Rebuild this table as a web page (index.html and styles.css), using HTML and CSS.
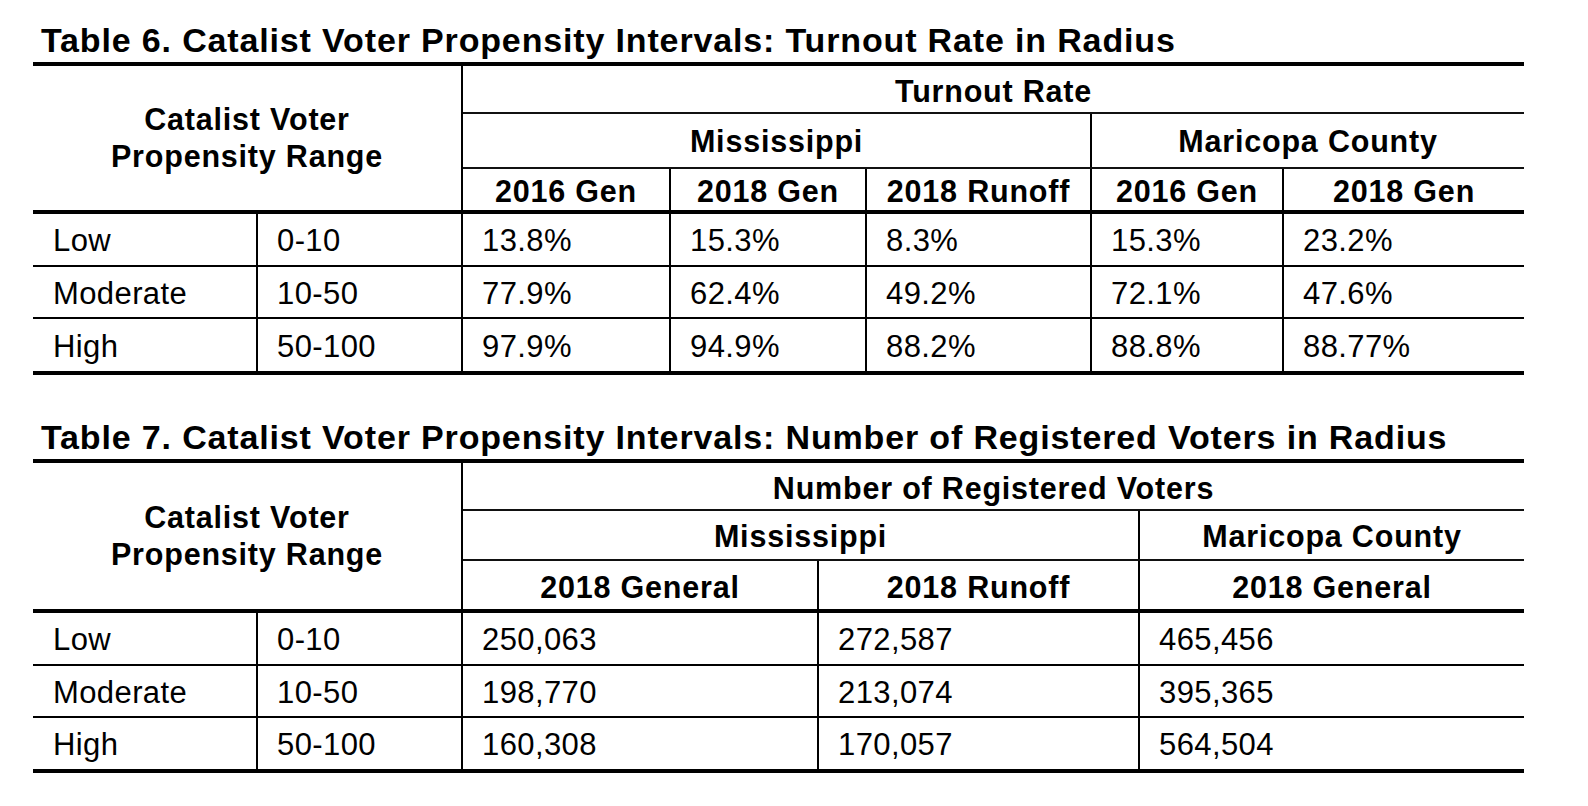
FILE: index.html
```html
<!DOCTYPE html>
<html lang="en">
<head>
<meta charset="utf-8">
<title>Catalist Voter Propensity Intervals</title>
<link rel="stylesheet" href="styles.css">
</head>
<body>
<main class="page">
  <section class="block block-6">
    <h2 class="title">Table 6. Catalist Voter Propensity Intervals: Turnout Rate in Radius</h2>
    <table class="grid t6">
      <colgroup>
        <col class="c-label"><col class="c-range">
        <col class="c6-a"><col class="c6-b"><col class="c6-c"><col class="c6-d"><col class="c6-e">
      </colgroup>
      <thead>
        <tr class="h1">
          <th class="corner" colspan="2" rowspan="3">Catalist Voter<br>Propensity Range</th>
          <th class="span-top" colspan="5">Turnout Rate</th>
        </tr>
        <tr class="h2">
          <th class="region" colspan="3">Mississippi</th>
          <th class="region" colspan="2">Maricopa County</th>
        </tr>
        <tr class="h3">
          <th class="yr">2016 Gen</th>
          <th class="yr">2018 Gen</th>
          <th class="yr">2018 Runoff</th>
          <th class="yr">2016 Gen</th>
          <th class="yr">2018 Gen</th>
        </tr>
      </thead>
      <tbody>
        <tr class="r1">
          <td class="lbl">Low</td><td>0-10</td>
          <td>13.8%</td><td>15.3%</td><td>8.3%</td><td>15.3%</td><td>23.2%</td>
        </tr>
        <tr class="r2">
          <td class="lbl">Moderate</td><td>10-50</td>
          <td>77.9%</td><td>62.4%</td><td>49.2%</td><td>72.1%</td><td>47.6%</td>
        </tr>
        <tr class="r3">
          <td class="lbl">High</td><td>50-100</td>
          <td>97.9%</td><td>94.9%</td><td>88.2%</td><td>88.8%</td><td>88.77%</td>
        </tr>
      </tbody>
    </table>
  </section>

  <section class="block block-7">
    <h2 class="title">Table 7. Catalist Voter Propensity Intervals: Number of Registered Voters in Radius</h2>
    <table class="grid t7">
      <colgroup>
        <col class="c-label"><col class="c-range">
        <col class="c7-a"><col class="c7-b"><col class="c7-c">
      </colgroup>
      <thead>
        <tr class="h1">
          <th class="corner" colspan="2" rowspan="3">Catalist Voter<br>Propensity Range</th>
          <th class="span-top" colspan="3">Number of Registered Voters</th>
        </tr>
        <tr class="h2">
          <th class="region" colspan="2">Mississippi</th>
          <th class="region">Maricopa County</th>
        </tr>
        <tr class="h3">
          <th class="yr">2018 General</th>
          <th class="yr">2018 Runoff</th>
          <th class="yr">2018 General</th>
        </tr>
      </thead>
      <tbody>
        <tr class="r1">
          <td class="lbl">Low</td><td>0-10</td>
          <td>250,063</td><td>272,587</td><td>465,456</td>
        </tr>
        <tr class="r2">
          <td class="lbl">Moderate</td><td>10-50</td>
          <td>198,770</td><td>213,074</td><td>395,365</td>
        </tr>
        <tr class="r3">
          <td class="lbl">High</td><td>50-100</td>
          <td>160,308</td><td>170,057</td><td>564,504</td>
        </tr>
      </tbody>
    </table>
  </section>
</main>
</body>
</html>
```

FILE: styles.css
```css
html, body {
  margin: 0;
  padding: 0;
  background: #ffffff;
}

body {
  font-family: "Liberation Sans", Arial, sans-serif;
  color: #000000;
}

.page {
  display: flex;
  flex-direction: column;
  padding: 20px 0 0 33px;
  width: 1491px;
}

.block-7 {
  margin-top: 42px;
}

.title {
  margin: 0;
  padding: 0 0 2px 8px;
  font-size: 34px;
  line-height: 40px;
  font-weight: bold;
  letter-spacing: 0.85px;
  border-bottom: 4px solid #000;
  white-space: nowrap;
}

.grid {
  width: 1491px;
  table-layout: fixed;
  border-collapse: collapse;
  border-bottom: 4px solid #000;
}

.c-label { width: 224px; }
.c-range { width: 205px; }
.c6-a { width: 208px; }
.c6-b { width: 196px; }
.c6-c { width: 225px; }
.c6-d { width: 192px; }
.c6-e { width: 241px; }
.c7-a { width: 356px; }
.c7-b { width: 321px; }
.c7-c { width: 385px; }

th {
  padding: 0;
  font-size: 30.5px;
  font-weight: bold;
  letter-spacing: 0.8px;
  text-align: center;
  vertical-align: middle;
  line-height: 37px;
}

th.corner {
  border-right: 2px solid #000;
  border-bottom: 4px solid #000;
  padding-top: 0;
}

th.span-top {
  padding-top: 5px;
}

th.region {
  padding-top: 2px;
}

th.yr {
  padding-top: 4px;
}

th.span-top,
th.region {
  border-bottom: 2px solid #111;
}

th.region + th.region {
  border-left: 2px solid #000;
}

th.yr + th.yr {
  border-left: 2px solid #000;
}

thead tr.h3 th {
  border-bottom: 4px solid #000;
}

.t6 tr.h1 { height: 47px; }
.t6 tr.h2 { height: 55px; }
.t6 tr.h3 { height: 39px; }
.t7 tr.h1 { height: 47px; }
.t7 tr.h2 { height: 50px; }
.t7 tr.h3 { height: 51px; }

td {
  padding: 3px 0 0 19px;
  font-size: 31px;
  letter-spacing: 0.4px;
  text-align: left;
  vertical-align: middle;
  line-height: 36px;
  border-left: 2px solid #000;
  border-bottom: 2px solid #000;
  white-space: nowrap;
}

td.lbl {
  border-left: none;
  padding-left: 20px;
}

tbody tr.r3 td {
  border-bottom: 4px solid #000;
}

.t6 tbody tr.r1 { height: 54px; }
.t6 tbody tr.r2 { height: 52px; }
.t6 tbody tr.r3 { height: 55px; }
.t7 tbody tr.r1 { height: 54px; }
.t7 tbody tr.r2 { height: 52px; }
.t7 tbody tr.r3 { height: 54px; }
```
